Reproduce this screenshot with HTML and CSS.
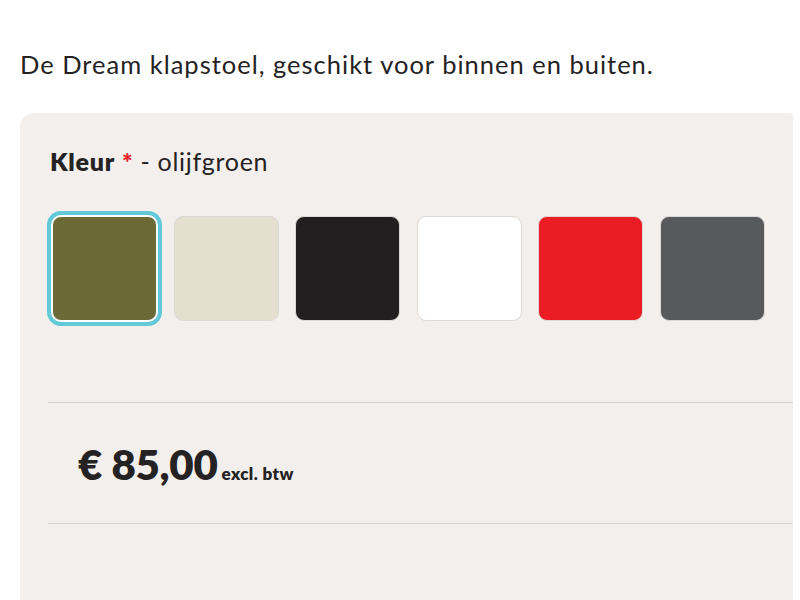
FILE: index.html
```html
<!DOCTYPE html>
<html lang="nl">
<head>
    <meta charset="UTF-8">
    <title>Dream klapstoel</title>
    <link rel="stylesheet" href="styles.css">
</head>
<body>
    <p class="intro">De Dream klapstoel, geschikt voor binnen en buiten.</p>

    <div class="product-box">
        <!-- Colour picker -->
        <div class="option">
            <div class="option-label">
                <strong>Kleur</strong> <span class="required">*</span> - <span id="color-name">olijfgroen</span>
            </div>
            <div class="swatches">
                <button class="swatch selected" style="background: #6b6a36;" title="olijfgroen"></button>
                <button class="swatch" style="background: #e4dfcf;" title="zand"></button>
                <button class="swatch" style="background: #231f20;" title="zwart"></button>
                <button class="swatch" style="background: #ffffff;" title="wit"></button>
                <button class="swatch" style="background: #ec1c24;" title="rood"></button>
                <button class="swatch" style="background: #58595b;" title="antraciet"></button>
            </div>
        </div>

        <!-- Price -->
        <div class="price-row">
            <span class="price">€ 85,00</span>
            <span class="price-note">excl. btw</span>
        </div>
    </div>
</body>
</html>
```

FILE: styles.css
```css
body {
    margin: 0;
    padding: 0;
    font-family: 'Lato', 'Open Sans', sans-serif;
    background-color: #ffffff;
    color: #252223;
    overflow: hidden;
}

.intro {
    margin: 0;
    padding: 48px 0 0 20px;
    font-size: 25.5px;
    line-height: 32px;
    letter-spacing: 1px;
}

.product-box {
    margin: 33px 7px 0 20px;
    background: #f3efed;
    border-radius: 14px 4px 0 0;
    padding: 32px 0 0 28px;
    height: 487px;
    box-sizing: border-box;
}

.option {
    padding-left: 2px;
}

.option-label {
    font-size: 25px;
    line-height: 32px;
    letter-spacing: 0.7px;
}

.option-label strong {
    font-weight: 800;
}

.required {
    color: #e3262c;
    font-weight: 800;
}

.swatches {
    display: flex;
    gap: 16.5px;
    margin-top: 39px;
    padding-left: 2px;
}

.swatch {
    width: 105px;
    height: 105px;
    border: 1px solid #dcd8d6;
    border-radius: 9px;
    padding: 0;
    cursor: pointer;
}

.swatch.selected {
    border-color: #ffffff;
    box-shadow: 0 0 0 1px #ffffff, 0 0 0 5px #63c9d9;
}

.price-row {
    margin-top: 81px;
    border-top: 1px solid #d6d2d0;
    border-bottom: 1px solid #d6d2d0;
    height: 122px;
    display: flex;
    align-items: baseline;
    padding-left: 30px;
    box-sizing: border-box;
    padding-top: 36px;
}

.price {
    font-size: 42px;
    font-weight: 800;
    letter-spacing: -0.3px;
}

.price-note {
    font-size: 17px;
    font-weight: 800;
    letter-spacing: 0.4px;
    margin-left: 4px;
}
```
